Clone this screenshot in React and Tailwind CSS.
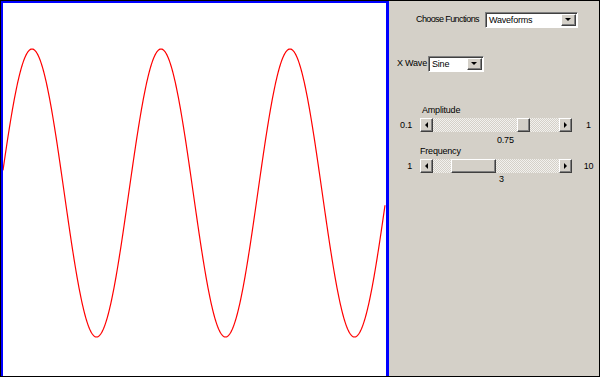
import React from 'react';

const FONT = "font-['Liberation_Sans',Arial,sans-serif] text-[9px] tracking-[-0.2px] text-black";

function wavePoints() {
  const pts = [];
  for (let x = 3; x <= 385; x += 0.5) {
    const y = 193 - 144 * Math.cos((2 * Math.PI * (x - 32)) / 129);
    pts.push(`${(x - 3).toFixed(1)},${(y - 3).toFixed(2)}`);
  }
  return pts.join(' ');
}

function Raised({ className = '', children }) {
  return (
    <div
      className={`flex items-center justify-center bg-[#d4d0c8] border-t border-l border-t-white border-l-white border-b border-r border-b-[#404040] border-r-[#404040] shadow-[inset_-1px_-1px_#808080] ${className}`}
    >
      {children}
    </div>
  );
}

function Arrow({ dir }) {
  const pts = {
    down: '0,0 6,0 3,3',
    left: '3,0 3,6 0,3',
    right: '0,0 0,6 3,3',
  }[dir];
  const w = dir === 'down' ? 7 : 4;
  const h = dir === 'down' ? 4 : 7;
  return (
    <svg width={w} height={h} viewBox={`0 0 ${w} ${h}`}>
      <polygon points={pts} fill="#000" />
    </svg>
  );
}

function Select({ value, className }) {
  return (
    <div
      className={`flex h-[16px] bg-white border border-t-[#808080] border-l-[#808080] border-b-white border-r-white shadow-[inset_1px_1px_#404040] ${className}`}
    >
      <div className="flex-1 pl-[3px] pt-[1px] leading-[13px]">{value}</div>
      <Raised className="w-[15px] h-[12px] mt-[1px] mr-[1px]">
        <Arrow dir="down" />
      </Raised>
    </div>
  );
}

function ScrollBar({ thumbLeft, thumbWidth }) {
  return (
    <div className="flex w-[152px] h-[14px]">
      <Raised className="w-[13px] h-full">
        <Arrow dir="left" />
      </Raised>
      <div className="flex-1 flex h-full bg-[repeating-conic-gradient(#f2f1ee_0_25%,#d4d0c8_0_50%)] bg-[length:2px_2px]">
        <div style={{ width: thumbLeft }} />
        <Raised className="h-full">
          <div style={{ width: thumbWidth - 2 }} />
        </Raised>
      </div>
      <Raised className="w-[13px] h-full">
        <Arrow dir="right" />
      </Raised>
    </div>
  );
}

function SliderRow({ min, max, thumbLeft, thumbWidth }) {
  return (
    <div className="flex items-center h-[14px]">
      <div className="w-[31px] text-right pr-[8px] leading-[11px]">{min}</div>
      <ScrollBar thumbLeft={thumbLeft} thumbWidth={thumbWidth} />
      <div className="flex-1 text-center pl-[6px] leading-[11px]">{max}</div>
    </div>
  );
}

export default function App() {
  return (
    <div className={`w-[600px] h-[377px] border border-black flex bg-[#d4d0c8] ${FONT}`}>
      <div className="w-[388px] h-full border-t-2 border-l-2 border-r-[3px] border-[#0000ff] bg-white">
        <svg width="383" height="373" viewBox="0 0 383 373" className="block">
          <polyline
            points={wavePoints()}
            fill="none"
            stroke="#ff0000"
            strokeWidth="1.2"
            strokeLinejoin="round"
          />
        </svg>
      </div>

      <div className="flex-1 flex flex-col">
        <div className="mt-[11px] flex items-center h-[16px]">
          <div className="ml-[27px] w-[69px] whitespace-nowrap tracking-[-0.6px]">Choose Functions</div>
          <Select value="Waveforms" className="w-[93px]" />
        </div>

        <div className="mt-[28px] flex items-center h-[16px]">
          <div className="ml-[8px] w-[31px] whitespace-nowrap">X Wave</div>
          <Select value="Sine" className="w-[56px]" />
        </div>

        <div className="mt-[33px] ml-[33px] h-[11px] leading-[11px]">Amplitude</div>
        <div className="mt-[2px]">
          <SliderRow min="0.1" max="1" thumbLeft={84} thumbWidth={13} />
        </div>
        <div className="mt-[3px] ml-[108px] h-[11px] leading-[11px]">0.75</div>

        <div className="ml-[31px] h-[11px] leading-[11px]">Frequency</div>
        <div className="mt-[2px]">
          <SliderRow min="1" max="10" thumbLeft={18} thumbWidth={45} />
        </div>
        <div className="mt-[1px] ml-[110px] h-[11px] leading-[11px]">3</div>
      </div>
    </div>
  );
}
